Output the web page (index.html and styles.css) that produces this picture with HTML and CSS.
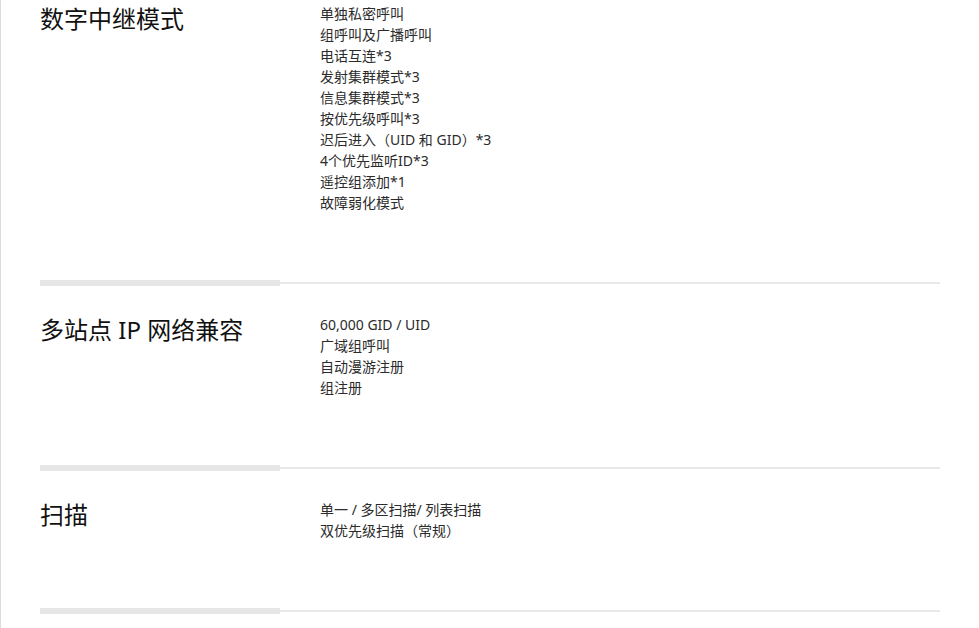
FILE: index.html
```html
<!DOCTYPE html>
<html lang="zh-CN">
<head>
  <meta charset="UTF-8" />
  <meta name="viewport" content="width=device-width, initial-scale=1.0"/>
  <title>功能规格</title>
<link rel="stylesheet" href="styles.css"></head>
<body>
  <div class="page">
    <div class="spec first">
      <h2>数字中继模式</h2>
      <ul>
        <li>单独私密呼叫</li>
        <li>组呼叫及广播呼叫</li>
        <li>电话互连*3</li>
        <li>发射集群模式*3</li>
        <li>信息集群模式*3</li>
        <li>按优先级呼叫*3</li>
        <li>迟后进入（UID 和 GID）*3</li>
        <li>4个优先监听ID*3</li>
        <li>遥控组添加*1</li>
        <li>故障弱化模式</li>
      </ul>
    </div>
    <div class="divider"><span class="bar"></span><span class="line"></span></div>

    <div class="spec">
      <h2>多站点 IP 网络兼容</h2>
      <ul>
        <li>60,000 GID / UID</li>
        <li>广域组呼叫</li>
        <li>自动漫游注册</li>
        <li>组注册</li>
      </ul>
    </div>
    <div class="divider"><span class="bar"></span><span class="line"></span></div>

    <div class="spec">
      <h2>扫描</h2>
      <ul>
        <li>单一 / 多区扫描/ 列表扫描</li>
        <li>双优先级扫描（常规）</li>
      </ul>
    </div>
    <div class="divider"><span class="bar"></span><span class="line"></span></div>
  </div>
</body>
</html>
```

FILE: styles.css
```css
body {
  margin: 0;
  padding: 0;
  background: #fff;
  font-family: "Noto Sans", "Noto Sans CJK SC", sans-serif;
  color: #222;
}

.page {
  border-left: 1px solid #dcdcdc;
  min-height: 100vh;
  padding: 0 39px 0 39px;
  box-sizing: border-box;
  width: 979px;
  overflow: hidden;
}

.spec {
  display: flex;
  padding: 28px 0 67px;
}

.spec.first {
  padding-top: 3px;
}

.spec h2 {
  width: 280px;
  flex: none;
  margin: 0;
  font-size: 24px;
  line-height: 32px;
  font-weight: normal;
  color: #111;
}

.spec ul {
  list-style: none;
  margin: 0;
  padding: 0;
}

.spec li {
  font-size: 14px;
  line-height: 21px;
  color: #2b2b2b;
}

.divider {
  display: flex;
  align-items: flex-start;
  width: 900px;
  height: 6px;
}

.divider .bar {
  width: 240px;
  height: 6px;
  background: #e6e6e6;
}

.divider .line {
  flex: 1;
  height: 2px;
  margin-top: 2px;
  background: #e8e8e8;
}
```
